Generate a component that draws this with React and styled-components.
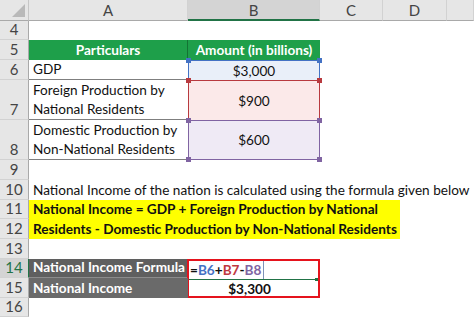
import React from 'react'
import styled, { createGlobalStyle } from 'styled-components'

const GlobalStyle = createGlobalStyle`
  body {
    margin: 0;
    background: #fff;
    font-family: Lato, "Liberation Sans", sans-serif;
  }
`

const Sheet = styled.div`
  display: grid;
  grid-template-columns: 29px 159px 132px 63px 64px 1fr;
  grid-template-rows: 21px 19px 20px 20px 40px 40px 20px 20px 19px 20px 20px 19px 20px 19px;
  width: 474px;
  height: 317px;
  overflow: hidden;
  font-size: 13.6px;
  color: #111;
`

const Corner = styled.div`
  background: #e6e6e6;
  border-right: 1px solid #c6c6c6;
  border-bottom: 1px solid #a9a9a9;
  display: flex;
  justify-content: flex-end;
  align-items: flex-end;
  padding: 0 3px 3px 0;
`

const Triangle = styled.div`
  width: 0;
  height: 0;
  border-left: 13px solid transparent;
  border-bottom: 13px solid #b9b9b9;
`

const ColHead = styled.div`
  background: ${p => (p.$selected ? '#d4d4d4' : '#e6e6e6')};
  border-right: 1px solid #d2d2d2;
  border-bottom: ${p => (p.$selected ? '2px solid #217346' : '1px solid #a9a9a9')};
  display: flex;
  align-items: center;
  justify-content: center;
  font-size: 15px;
  color: #444;
`

const RowHead = styled.div`
  grid-column: 1;
  background: ${p => (p.$selected ? '#d4d4d4' : '#e6e6e6')};
  border-right: 1px solid ${p => (p.$selected ? '#217346' : '#a9a9a9')};
  border-bottom: 1px solid #d2d2d2;
  display: flex;
  align-items: flex-end;
  justify-content: center;
  line-height: 19px;
  font-size: 15px;
  color: ${p => (p.$selected ? '#217346' : '#444')};
`

const Cell = styled.div`
  grid-column: ${p => (p.$span ? `span ${p.$span}` : 'auto')};
  display: flex;
  flex-direction: column;
  justify-content: ${p => p.$valign || 'flex-end'};
  align-items: ${p => p.$align || 'flex-start'};
  padding: 0 4px;
  line-height: 19px;
  white-space: nowrap;
  overflow: hidden;
  background: ${p => p.$bg || 'transparent'};
  color: ${p => p.$color || '#111'};
  font-weight: ${p => (p.$bold ? 700 : 400)};
  border-bottom: ${p => p.$line || 'none'};
  border-right: ${p => p.$edge || 'none'};
`

const Empty = styled.div`
  grid-column: 2 / -1;
`

const RefCell = styled.div`
  position: relative;
  display: flex;
  align-items: center;
  justify-content: center;
  background: ${p => p.$bg};
  border: 1px solid ${p => p.$c};
  border-bottom: ${p => (p.$last ? `1px solid ${p.$c}` : 'none')};
  color: #111;
`

const Handle = styled.span`
  position: absolute;
  width: 5px;
  height: 5px;
  background: ${p => p.$c};
  ${p => (p.$right ? 'right: -3px;' : 'left: -3px;')}
  ${p => (p.$bottom ? 'bottom: -3px;' : 'top: -3px;')}
  z-index: 2;
`

const Banner = styled.div`
  grid-column: 2 / -1;
  grid-row: span 2;
  justify-self: start;
  width: 367px;
  background: #ffff00;
  font-weight: 700;
  padding-left: 4px;
  display: flex;
  flex-direction: column;
  justify-content: center;
  line-height: 19.5px;
  white-space: nowrap;
`

const ResultBox = styled.div`
  grid-row: span 2;
  border: 2px solid #e5131d;
  margin-left: -1px;
  display: flex;
  flex-direction: column;
`

const FormulaRow = styled.div`
  position: relative;
  height: 18px;
  display: flex;
  border-bottom: 1px solid #217346;
  font-weight: 700;
`

const Formula = styled.div`
  padding: 0 2px 0 1px;
  line-height: 18px;
  border-right: 1px solid #7d93b8;
`

const Ref = styled.span`
  color: ${p => p.$c || '#111'};
`

const FillHandle = styled.span`
  position: absolute;
  right: 0;
  bottom: -2px;
  width: 3px;
  height: 3px;
  background: #217346;
`

const Total = styled.div`
  flex: 1;
  display: flex;
  align-items: flex-end;
  justify-content: center;
  padding-right: 8px;
  font-weight: 700;
  line-height: 18px;
`

const refs = [
  { value: '$3,000', bg: '#e9eff9', c: '#4472c4' },
  { value: '$900', bg: '#fbe9e9', c: '#b83a3f' },
  { value: '$600', bg: '#efeaf5', c: '#8064a2', last: true },
]

const Handles = ({ c, last }) => (
  <>
    <Handle $c={c} />
    <Handle $c={c} $right />
    {last && <Handle $c={c} $bottom />}
    {last && <Handle $c={c} $bottom $right />}
  </>
)

const RefValue = ({ value, bg, c, last }) => (
  <RefCell $bg={bg} $c={c} $last={last}>
    {value}
    <Handles c={c} last={last} />
  </RefCell>
)

const rowLine = '1px solid #7f7f7f'

export default function App() {
  return (
    <>
      <GlobalStyle />
      <Sheet>
        <Corner><Triangle /></Corner>
        <ColHead>A</ColHead>
        <ColHead $selected>B</ColHead>
        <ColHead>C</ColHead>
        <ColHead>D</ColHead>
        <ColHead />

        <RowHead>4</RowHead>
        <Empty />

        <RowHead>5</RowHead>
        <Cell $bg="#1e9f4a" $color="#fff" $bold $align="center" $valign="center" $edge="1px solid #137334">Particulars</Cell>
        <Cell $bg="#1e9f4a" $color="#fff" $bold $align="center" $valign="center">Amount (in billions)</Cell>

        <RowHead>6</RowHead>
        <Cell $line={rowLine}>GDP</Cell>
        <RefValue {...refs[0]} />

        <RowHead>7</RowHead>
        <Cell $line={rowLine}>
          <span>Foreign Production by</span>
          <span>National Residents</span>
        </Cell>
        <RefValue {...refs[1]} />

        <RowHead>8</RowHead>
        <Cell $line={rowLine}>
          <span>Domestic Production by</span>
          <span>Non-National Residents</span>
        </Cell>
        <RefValue {...refs[2]} />

        <RowHead>9</RowHead>
        <Empty />

        <RowHead>10</RowHead>
        <Cell $span={5}>National Income of the nation is calculated using the formula given below</Cell>

        <RowHead>11</RowHead>
        <Banner>
          <span>National Income = GDP + Foreign Production by National</span>
          <span>Residents - Domestic Production by Non-National Residents</span>
        </Banner>
        <RowHead>12</RowHead>

        <RowHead>13</RowHead>
        <Empty />

        <RowHead $selected>14</RowHead>
        <Cell $bg="#5f5f5f" $color="#fff" $bold $line="1px solid #8c8c8c">National Income Formula</Cell>
        <ResultBox>
          <FormulaRow>
            <Formula>
              =<Ref $c="#4472c4">B6</Ref>+<Ref $c="#c0393f">B7</Ref>-<Ref $c="#8064a2">B8</Ref>
            </Formula>
            <FillHandle />
          </FormulaRow>
          <Total>$3,300</Total>
        </ResultBox>

        <RowHead>15</RowHead>
        <Cell $bg="#6a6a6a" $color="#fff" $bold>National Income</Cell>

        <RowHead>16</RowHead>
        <Empty />
      </Sheet>
    </>
  )
}
